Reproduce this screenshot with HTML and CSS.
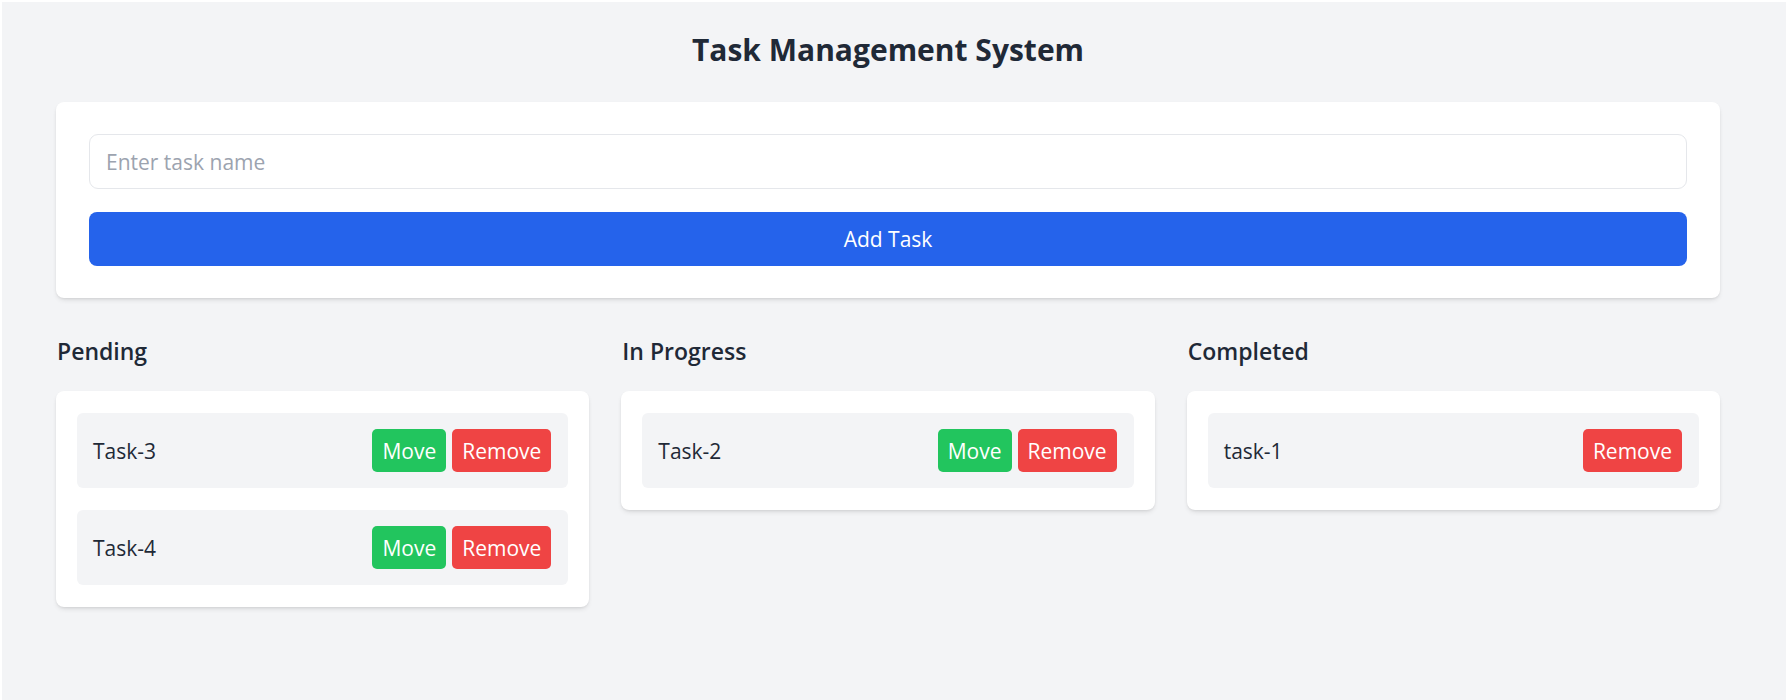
FILE: index.html
```html
<!DOCTYPE html>
<html lang="en">
<head>
<meta charset="utf-8">
<title>Task Management System</title>
<link rel="stylesheet" href="styles.css">
</head>
<body>
<div class="app">
  <h1 class="title">Task Management System</h1>
  <div class="card add-card">
    <input class="task-input" type="text" placeholder="Enter task name">
    <button class="btn-add">Add Task</button>
  </div>
  <div class="board">
    <section class="column">
      <h2 class="column-title">Pending</h2>
      <div class="card column-card">
        <div class="task">
          <span class="task-name">Task-3</span>
          <div class="actions">
            <button class="btn btn-move">Move</button>
            <button class="btn btn-remove">Remove</button>
          </div>
        </div>
        <div class="task">
          <span class="task-name">Task-4</span>
          <div class="actions">
            <button class="btn btn-move">Move</button>
            <button class="btn btn-remove">Remove</button>
          </div>
        </div>
      </div>
    </section>
    <section class="column">
      <h2 class="column-title">In Progress</h2>
      <div class="card column-card">
        <div class="task">
          <span class="task-name">Task-2</span>
          <div class="actions">
            <button class="btn btn-move">Move</button>
            <button class="btn btn-remove">Remove</button>
          </div>
        </div>
      </div>
    </section>
    <section class="column">
      <h2 class="column-title">Completed</h2>
      <div class="card column-card">
        <div class="task">
          <span class="task-name">task-1</span>
          <div class="actions">
            <button class="btn btn-remove">Remove</button>
          </div>
        </div>
      </div>
    </section>
  </div>
</div>
</body>
</html>
```

FILE: styles.css
```css
html {
  background: #ffffff;
}

body {
  margin: 2px 0 0 2px;
  height: 698px;
  background: #f3f4f6;
  font-family: "Open Sans", "Noto Sans", sans-serif;
  color: #1f2937;
  overflow: hidden;
}

.app {
  width: 1664px;
  margin-left: 54px;
  padding-top: 27px;
}

.title {
  margin: 0 0 31px;
  font-size: 30px;
  line-height: 42px;
  font-weight: 700;
  text-align: center;
  color: #1f2937;
}

.card {
  background: #ffffff;
  border-radius: 8px;
  box-shadow: 0 3px 5px -1px rgba(0, 0, 0, 0.1), 0 1px 3px -1px rgba(0, 0, 0, 0.12);
}

.add-card {
  padding: 32px 33px;
  display: flex;
  flex-direction: column;
  gap: 23px;
}

.task-input {
  box-sizing: border-box;
  height: 55px;
  width: 100%;
  padding: 0 16px;
  border: 1px solid #e5e7eb;
  border-radius: 9px;
  font-family: inherit;
  font-size: 21px;
  color: #1f2937;
  outline: none;
}

.task-input::placeholder {
  color: #9ca3af;
}

.btn-add {
  height: 54px;
  border: none;
  border-radius: 8px;
  background: #2563eb;
  color: #ffffff;
  font-family: inherit;
  font-size: 21px;
}

.board {
  margin-top: 35px;
  display: grid;
  grid-template-columns: repeat(3, 1fr);
  column-gap: 32px;
  align-items: start;
}

.column-title {
  margin: 0 0 22px 1px;
  font-size: 23px;
  line-height: 36px;
  font-weight: 600;
  color: #1f2937;
}

.column-card {
  padding: 22px 21px;
  display: flex;
  flex-direction: column;
  gap: 22px;
}

.task {
  height: 75px;
  padding: 0 17px 0 16px;
  display: flex;
  align-items: center;
  justify-content: space-between;
  background: #f3f4f6;
  border-radius: 6px;
}

.task-name {
  font-size: 21px;
  color: #1f2937;
}

.actions {
  display: flex;
  gap: 6px;
}

.btn {
  height: 43px;
  padding: 0 10px;
  border: none;
  border-radius: 5px;
  color: #ffffff;
  font-family: inherit;
  font-size: 21px;
}

.btn-move {
  background: #22c55e;
}

.btn-remove {
  background: #ef4444;
}
```
